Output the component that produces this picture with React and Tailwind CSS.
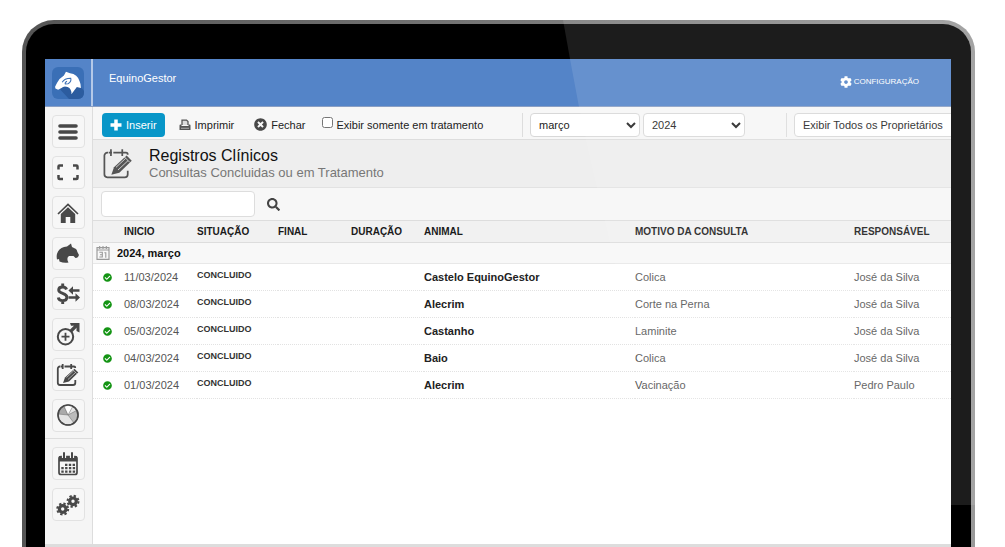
import { FaCog, FaSearch, FaTimesCircle, FaCheckCircle } from 'react-icons/fa'

const rows = [
  { date: '11/03/2024', status: 'CONCLUIDO', animal: 'Castelo EquinoGestor', reason: 'Colica', owner: 'José da Silva' },
  { date: '08/03/2024', status: 'CONCLUIDO', animal: 'Alecrim', reason: 'Corte na Perna', owner: 'José da Silva' },
  { date: '05/03/2024', status: 'CONCLUIDO', animal: 'Castanho', reason: 'Laminite', owner: 'José da Silva' },
  { date: '04/03/2024', status: 'CONCLUIDO', animal: 'Baio', reason: 'Colica', owner: 'José da Silva' },
  { date: '01/03/2024', status: 'CONCLUIDO', animal: 'Alecrim', reason: 'Vacinação', owner: 'Pedro Paulo' },
]

function Svg({ children, className = 'h-6 w-6' }) {
  return (
    <svg viewBox="0 0 24 24" fill="none" stroke="currentColor" className={className} aria-hidden="true">
      {children}
    </svg>
  )
}

function IconMenu() {
  return (
    <Svg>
      <path d="M4 6h16M4 12h16M4 18h16" strokeWidth="3.6" strokeLinecap="round" />
    </Svg>
  )
}

function IconExpand() {
  return (
    <Svg>
      <path
        d="M2.500 9.500V6.500q0-1 1-1H7M17 5.500h3.500q1 0 1 1v3M21.500 15v3q0 1-1 1H17M7 19H3.500q-1 0-1-1v-3"
        strokeWidth="2.500"
      />
    </Svg>
  )
}

function IconHome() {
  return (
    <Svg>
      <path d="M2 13 12 3.500 22 13" strokeWidth="1.700" />
      <path d="M12 6.200 4.800 13v9h4.900v-6h4.600v6h4.900v-9z" fill="currentColor" stroke="none" />
    </Svg>
  )
}

function IconHorse() {
  return (
    <Svg>
      <path
        d="M15 2.500 16 6 20 8Q21 9 21.400 11L23 14 22 16Q21 17 19.500 17L17.500 15 13 15Q10 17 12.500 21.500 8 22.500 3.500 20.500L3 18 1 18.500Q0 14 2 10.500 4.500 6 11 5.500z"
        fill="currentColor"
        stroke="none"
      />
    </Svg>
  )
}

function IconFinance() {
  return (
    <Svg>
      <path
        d="M10.500 7.500C10 5.700 8.600 5 6.600 5 4.200 5 2.700 6.200 2.700 8c0 4.300 8.200 2.500 8.200 7.200 0 2-1.600 3.400-4.200 3.400-2.400 0-4-1-4.400-3.200M6.700 1.500V5M6.700 18.500V22"
        strokeWidth="2.900"
      />
      <path d="M16 8.500h7.500M12.500 15.500H20" strokeWidth="2.300" />
      <path d="M17 4.300v8.400l-4.600-4.200zM19.500 11.300v8.400l4.500-4.200z" fill="currentColor" stroke="none" />
    </Svg>
  )
}

function IconBreeding() {
  return (
    <Svg>
      <circle cx="9.500" cy="14.700" r="7.700" strokeWidth="2" />
      <path d="M9.500 10.700v8M5.500 14.700h8" strokeWidth="1.800" />
      <path d="M15 9l6-6" strokeWidth="3.200" />
      <path d="M14 1h9.500v9.500L20.500 9V5.500L18 3.800h-3z" fill="currentColor" stroke="none" />
    </Svg>
  )
}

function IconClinic({ className = 'h-6 w-6', thin }) {
  return (
    <Svg className={className}>
      <path
        d="M4.500 3.500H4A2.200 2.200 0 0 0 1.800 5.700v14A2.300 2.300 0 0 0 4 22h13a2.300 2.300 0 0 0 2.300-2.300V17M8.500 3.500h5M17 3.500h1q1.300 0 1.300 1.500M6.700 1v5M15.200 1v5M5 3.500h2.500M13.500 3.500h4"
        strokeWidth={thin ? 1.3 : 1.8}
      />
      <path d="M7 20l2-5.500 9.500-8.800 3.800 3.900-9.300 8.900z" fill="currentColor" stroke="none" />
      <path d="M10.500 14.500l7.200-6.700M12 16.500l7.500-7" stroke="#eee" strokeWidth=".6" />
      <path d="M16.800 6.700l4 4" stroke="#eee" strokeWidth=".6" />
    </Svg>
  )
}

function IconChart() {
  return (
    <Svg>
      <circle cx="12" cy="12" r="10" fill="#e4e4e4" />
      <path d="M12 12 8 3a10 10 0 0 0-6 8z" fill="#aaa" stroke="#666" strokeWidth=".5" />
      <path d="M12 12 8 3a10 10 0 0 1 9 0z" fill="#fff" stroke="#666" strokeWidth=".5" />
      <path d="M12 12l9.500-5A10 10 0 0 1 18 20z" fill="#bbb" stroke="#666" strokeWidth=".5" />
      <circle cx="12" cy="12" r="10" strokeWidth="1.600" />
    </Svg>
  )
}

function IconCalendar() {
  return (
    <Svg>
      <rect x="3" y="4.500" width="18" height="18" rx="2" strokeWidth="1.700" />
      <path d="M3 4h18v5.500H3z" fill="currentColor" stroke="none" />
      <path d="M8 0v6M16 0v6" stroke="#f7f7f7" strokeWidth="4.200" />
      <path d="M8 1v5.500M16 1v5.500" strokeWidth="2" strokeLinecap="round" />
      <path d="M9 12.800h10M5.300 16.200h13.800M5.300 19.600h13.800" strokeWidth="2.200" strokeDasharray="2.400 1.400" />
    </Svg>
  )
}

function Gear({ cx, cy }) {
  return (
    <g>
      <circle cx={cx} cy={cy} r="3.300" strokeWidth="3.200" />
      <circle cx={cx} cy={cy} r="5.500" strokeWidth="2" strokeDasharray="2.300 2.020" />
    </g>
  )
}

function IconGears() {
  return (
    <Svg>
      <Gear cx="6.700" cy="16" />
      <Gear cx="17" cy="8.300" />
    </Svg>
  )
}

function IconPlus() {
  return (
    <Svg className="h-3 w-3">
      <path d="M12 1v22M1 12h22" strokeWidth="7" />
    </Svg>
  )
}

function IconPrinter() {
  return (
    <Svg className="h-3 w-3 text-[#555]">
      <path d="M6 12V2h9l3 3v7" strokeWidth="2.500" fill="#ddd" />
      <path d="M1 13q0-2 2-2h2v3h14v-3h2q2 0 2 2v9H1z" fill="currentColor" stroke="none" />
      <path d="M4 18.500h16" stroke="#ccc" strokeWidth="1.500" />
    </Svg>
  )
}

function IconDay() {
  return (
    <Svg className="h-4 w-4 text-[#999]">
      <path d="M3 4h18v17.500H3zM3 7.500h18M7 1.500V6M12 1.500V6M17 1.500V6" strokeWidth="1.700" />
      <path d="M6.500 11H11v7H6.500M7.500 14.500H11M14 11.500h2.200V19" strokeWidth="1.600" />
    </Svg>
  )
}

function Logo() {
  return (
    <svg viewBox="0 0 94 94" className="h-8 w-8" role="img" aria-label="Logo">
      <rect width="94" height="94" rx="18" fill="#3a6fb6" />
      <path d="M20 62 50 94H76Q94 94 94 76V70L76 50z" fill="#2c5c9f" />
      <path
        d="M9 58 15 46Q22 33 35 25L41 14 53 18Q75 20 81 42 85 50 85 62L73 59 57 80Q58 64 46 59 34 55 28 62L18 67 10 63z"
        fill="#fff"
      />
      <path d="M30 45Q36 33 55 33 58 44 47 49L39 50Q37 46 44 42" fill="none" stroke="#3a6fb6" strokeWidth="3" />
    </svg>
  )
}

const menu = [
  { label: 'Menu', Icon: IconMenu },
  { label: 'Tela cheia', Icon: IconExpand },
  { label: 'Início', Icon: IconHome },
  { label: 'Animais', Icon: IconHorse },
  { label: 'Financeiro', Icon: IconFinance },
  { label: 'Reprodução', Icon: IconBreeding },
  { label: 'Clínica', Icon: IconClinic },
  { label: 'Relatórios', Icon: IconChart },
]

function SideButton({ label, children }) {
  return (
    <button
      aria-label={label}
      className="flex h-[33px] w-[33px] shrink-0 items-center justify-center rounded-sm border border-[#e2e2e2] bg-[#f7f7f7] text-[#484848]"
    >
      {children}
    </button>
  )
}

function Sidebar() {
  return (
    <aside className="flex w-12 shrink-0 flex-col border-r border-[#ddd] bg-[#f5f5f5]">
      <nav className="flex h-[332px] flex-col items-center justify-between border-b border-[#ddd] pb-1.5 pr-px pt-2">
        {menu.map(({ label, Icon }) => (
          <SideButton key={label} label={label}>
            <Icon />
          </SideButton>
        ))}
      </nav>
      <nav className="flex flex-col items-center gap-2 pr-px pt-2">
        <SideButton label="Agenda">
          <IconCalendar />
        </SideButton>
        <SideButton label="Ajustes">
          <IconGears />
        </SideButton>
      </nav>
    </aside>
  )
}

function Toolbar() {
  return (
    <div className="flex h-[33px] items-center whitespace-nowrap border-b border-[#ddd] bg-[#f7f7f7] pl-[9px] pt-[3px] text-[#222]">
      <div className="flex h-6 w-[421px] shrink-0 items-center border-r border-[#ddd]">
        <button className="flex h-6 items-center gap-1 rounded-sm bg-[#0896c8] px-2 text-white">
          <IconPlus />
          Inserir
        </button>
        <button className="ml-3.5 flex items-center gap-1">
          <IconPrinter />
          Imprimir
        </button>
        <button className="ml-5 flex items-center gap-1">
          <FaTimesCircle className="h-[13px] w-[13px] text-[#484848]" />
          Fechar
        </button>
        <label className="ml-4 flex items-center gap-1">
          <input type="checkbox" className="mb-1 h-[11px] w-[11px]" />
          Exibir somente em tratamento
        </label>
      </div>
      <div className="flex h-6 w-[264px] shrink-0 items-center gap-[3px] border-r border-[#ddd] pl-[7px]">
        <select aria-label="Mês" className="h-6 w-[110px] rounded-sm border border-[#d8d8d8] bg-white pl-1">
          <option>março</option>
        </select>
        <select aria-label="Ano" className="h-6 w-[102px] rounded-sm border border-[#d8d8d8] bg-white pl-1">
          <option>2024</option>
        </select>
      </div>
      <select aria-label="Proprietário" className="ml-[7px] h-6 w-[190px] shrink-0 rounded-sm border border-[#d8d8d8] bg-white pl-1">
        <option>Exibir Todos os Proprietários</option>
      </select>
    </div>
  )
}

function Records() {
  return (
    <table className="w-full table-fixed border-collapse text-left text-[#555]">
      <colgroup>
        <col className="w-[31px]" />
        <col className="w-[73px]" />
        <col className="w-[81px]" />
        <col className="w-[73px]" />
        <col className="w-[73px]" />
        <col className="w-[211px]" />
        <col className="w-[219px]" />
        <col />
      </colgroup>
      <thead>
        <tr className="h-[22px] border-y border-[#ddd] bg-[#f1f1f1] text-[10px] text-[#1a1a1a]">
          <td />
          <th>INICIO</th>
          <th>SITUAÇÃO</th>
          <th>FINAL</th>
          <th>DURAÇÃO</th>
          <th>ANIMAL</th>
          <th>MOTIVO DA CONSULTA</th>
          <th>RESPONSÁVEL</th>
        </tr>
      </thead>
      <tbody>
        <tr className="h-[21px] border-b border-[#e8e8e8] bg-[#f8f8f8] text-[#111]">
          <th colSpan={8}>
            <div className="flex items-center gap-1.5 pl-0.5">
              <IconDay />
              2024, março
            </div>
          </th>
        </tr>
        {rows.map((row) => (
          <tr key={row.date} className="h-[27px] border-b border-dotted border-[#e2e2e2]">
            <td>
              <FaCheckCircle className="ml-2.5 h-[9px] w-[9px] text-[#149414]" />
            </td>
            <td>{row.date}</td>
            <td className="pb-1 text-[9px] font-bold text-[#333]">{row.status}</td>
            <td />
            <td />
            <td className="font-bold text-[#222]">{row.animal}</td>
            <td>{row.reason}</td>
            <td>{row.owner}</td>
          </tr>
        ))}
      </tbody>
    </table>
  )
}

export default function App() {
  return (
    <div className="flex min-h-screen flex-col overflow-hidden bg-white pl-[22px] pr-[30px] pt-5 font-['Liberation_Sans',Arial,sans-serif] text-[11px] leading-4">
      {/* Laptop lid */}
      <div className="relative flex flex-1 flex-col overflow-hidden rounded-t-[32px] bg-linear-to-r from-[#555] via-[#777] to-[#999] px-1 pt-1">
        <div className="flex flex-1 flex-col rounded-t-[28px] bg-black pl-[19px] pr-5 pt-[35px]">
          <div className="flex flex-1 flex-col overflow-hidden bg-white">
            <header className="flex h-12 shrink-0 border-b border-[#8a9fc4] bg-[#5484c8] text-white">
              <div className="flex w-12 shrink-0 items-center justify-center border-r-2 border-[#b5c9e8]">
                <Logo />
              </div>
              <div className="flex flex-1 items-center justify-between pb-2.5 pl-4 pr-8">
                <span>EquinoGestor</span>
                <button className="mt-2 flex items-center gap-0.5 text-[8px]">
                  <FaCog className="h-3 w-3" />
                  CONFIGURAÇÃO
                </button>
              </div>
            </header>

            <div className="flex flex-1">
              <Sidebar />
              <main className="min-w-0 flex-1 overflow-hidden">
                <Toolbar />
                <div className="flex h-12 items-center gap-[15px] border-b border-[#e2e2e2] bg-[#eee] pl-[9px]">
                  <span className="text-[#555]">
                    <IconClinic className="h-8 w-8" thin />
                  </span>
                  <div>
                    <h1 className="text-base leading-[18px] text-[#111]">Registros Clínicos</h1>
                    <p className="text-[13px] leading-4 text-[#777]">Consultas Concluidas ou em Tratamento</p>
                  </div>
                </div>
                <div className="flex h-8 items-center gap-3 bg-[#f7f7f7] pl-2">
                  <input type="text" aria-label="Pesquisar" className="h-[26px] w-[154px] rounded-sm border border-[#ddd] bg-white px-2" />
                  <button aria-label="Buscar">
                    <FaSearch className="h-[13px] w-[13px] text-[#444]" />
                  </button>
                </div>
                <Records />
              </main>
            </div>
            <div className="h-[3px] bg-[#ddd]" />
          </div>
        </div>

        {/* Glass reflection */}
        <svg
          viewBox="0 0 953 527"
          preserveAspectRatio="none"
          className="pointer-events-none absolute inset-0 h-full w-full"
          aria-hidden="true"
        >
          <path d="M541 0L548 39 557 87 568 138 650 485H953V0z" fill="#fff" opacity=".11" />
        </svg>
      </div>
    </div>
  )
}
